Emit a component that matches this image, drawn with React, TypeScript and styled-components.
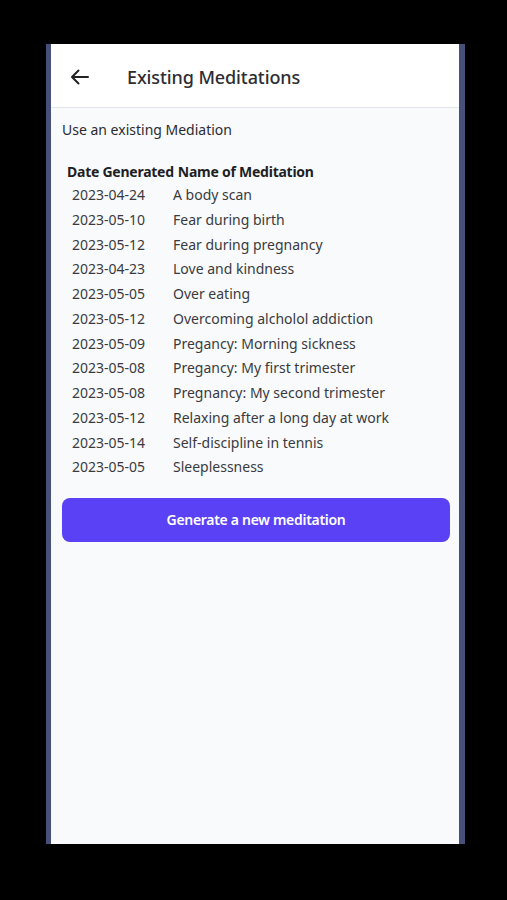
import React from "react";
import styled, { createGlobalStyle } from "styled-components";

const Global = createGlobalStyle`
  html, body { margin: 0; padding: 0; background: #000; }
  body { font-family: "Noto Sans", "Open Sans", sans-serif; }
  * { box-sizing: border-box; }
`;

const Stage = styled.div`
  width: 507px;
  height: 900px;
  background: #000;
  padding: 44px 0 0 46px;
`;

const Phone = styled.div`
  width: 419px;
  height: 800px;
  border-left: 5px solid #465079;
  border-right: 6px solid #465079;
  background: #f8fafc;
  display: flex;
  flex-direction: column;
`;

const Header = styled.header`
  height: 64px;
  background: #fff;
  border-bottom: 1px solid #e2e5ea;
  display: flex;
  align-items: center;
  padding: 3px 0 0 18px;
  gap: 38px;
`;

const Title = styled.h1`
  margin: 0;
  font-size: 18px;
  font-weight: 500;
  color: #2d2d33;
  letter-spacing: -0.1px;
`;

const BackButton = styled.button`
  border: 0;
  background: none;
  padding: 0;
  width: 20px;
  height: 20px;
  display: flex;
  align-items: center;
  justify-content: center;
  color: #222;
`;

const Content = styled.main`
  padding: 12px 9px 0 11px;
  display: flex;
  flex-direction: column;
`;

const Intro = styled.p`
  margin: 0;
  font-size: 14px;
  color: #2b2b30;
  line-height: 20px;
`;

const HeadRow = styled.div`
  margin-top: 21px;
  padding-left: 5px;
  display: flex;
  gap: 4px;
  white-space: nowrap;
  font-size: 14px;
  font-weight: 700;
  color: #1f1f24;
  line-height: 22px;
  letter-spacing: -0.25px;
`;

const Table = styled.div`
  padding-left: 10px;
  display: grid;
  grid-template-columns: 101px 1fr;
`;

const Cell = styled.div`
  font-size: 14px;
  color: #3a3a40;
  line-height: 24.75px;
  white-space: nowrap;
`;

const Primary = styled.button`
  margin-top: 18px;
  height: 44px;
  padding-bottom: 2px;
  border: 0;
  border-radius: 8px;
  background: #5b41f6;
  color: #fff;
  font-family: inherit;
  font-size: 14px;
  font-weight: 600;
  letter-spacing: -0.3px;
`;

const rows: [string, string][] = [
  ["2023-04-24", "A body scan"],
  ["2023-05-10", "Fear during birth"],
  ["2023-05-12", "Fear during pregnancy"],
  ["2023-04-23", "Love and kindness"],
  ["2023-05-05", "Over eating"],
  ["2023-05-12", "Overcoming alcholol addiction"],
  ["2023-05-09", "Pregancy: Morning sickness"],
  ["2023-05-08", "Pregancy: My first trimester"],
  ["2023-05-08", "Pregnancy: My second trimester"],
  ["2023-05-12", "Relaxing after a long day at work"],
  ["2023-05-14", "Self-discipline in tennis"],
  ["2023-05-05", "Sleeplessness"],
];

export default function App() {
  return (
    <Stage>
      <Global />
      <Phone>
        <Header>
          <BackButton aria-label="Back">
            <svg width="19" height="16" viewBox="0 0 19 16" fill="none">
              <path
                d="M18 8H2M8.5 1.5L2 8l6.5 6.5"
                stroke="currentColor"
                strokeWidth="2"
                strokeLinecap="round"
                strokeLinejoin="round"
              />
            </svg>
          </BackButton>
          <Title>Existing Meditations</Title>
        </Header>
        <Content>
          <Intro>Use an existing Mediation</Intro>
          <HeadRow>
            <span>Date Generated</span>
            <span>Name of Meditation</span>
          </HeadRow>
          <Table>
            {rows.map(([d, n], i) => (
              <React.Fragment key={i}>
                <Cell>{d}</Cell>
                <Cell>{n}</Cell>
              </React.Fragment>
            ))}
          </Table>
          <Primary>Generate a new meditation</Primary>
        </Content>
      </Phone>
    </Stage>
  );
}
